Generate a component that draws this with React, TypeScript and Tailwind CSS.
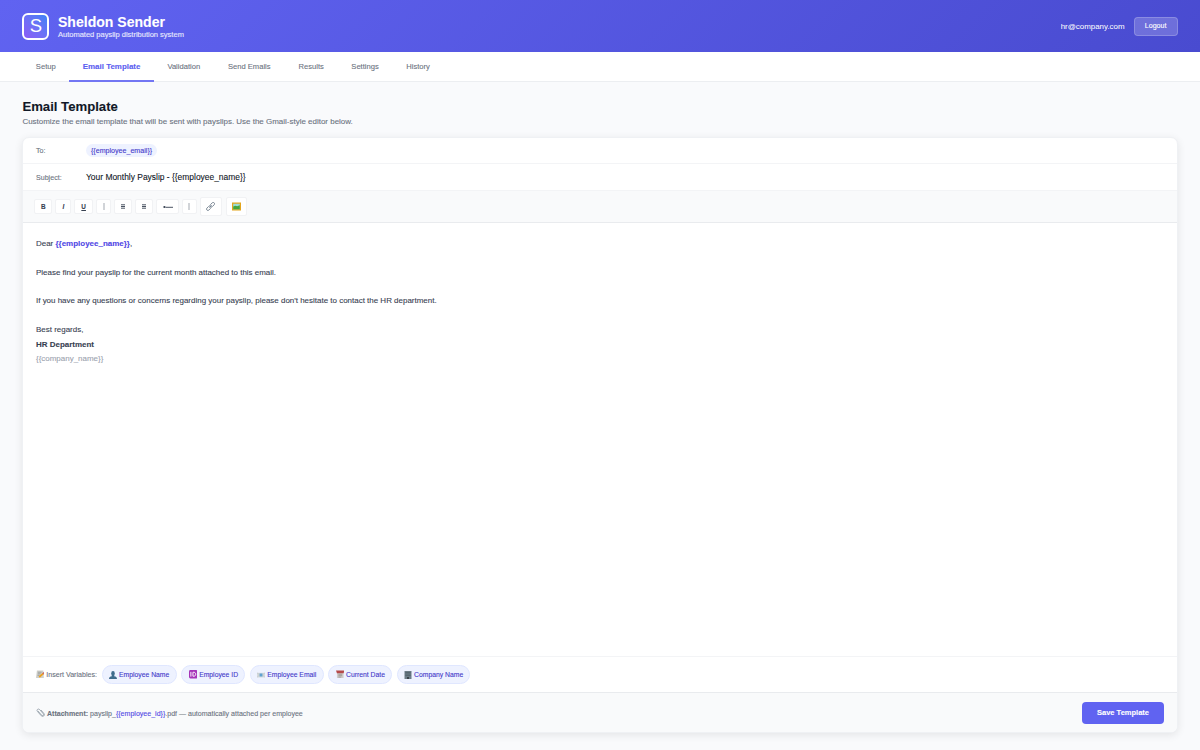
import type { ReactNode } from "react";

const TABS = [
  { label: "Setup", width: "w-[46.8px]" },
  { label: "Email Template", width: "w-[84.8px]", active: true },
  { label: "Validation", width: "w-[59.6px]" },
  { label: "Send Emails", width: "w-[71.4px]" },
  { label: "Results", width: "w-[52.6px]" },
  { label: "Settings", width: "w-[55px]" },
  { label: "History", width: "w-[51px]" },
];

const TOOLS: { label: ReactNode; size: string }[] = [
  { label: <b>B</b>, size: "w-[18px] h-[15px]" },
  { label: <b className="italic">I</b>, size: "w-[16px] h-[15px]" },
  { label: <b className="underline">U</b>, size: "w-[18.5px] h-[15px]" },
  { label: <BarIcon />, size: "w-[15.4px] h-[15px]" },
  { label: <LinesIcon />, size: "w-[18px] h-[15px]" },
  { label: <LinesIcon />, size: "w-[18px] h-[15px]" },
  { label: <BulletIcon />, size: "w-[22.5px] h-[15px]" },
  { label: <BarIcon />, size: "w-[15.4px] h-[15px]" },
  { label: <LinkIcon />, size: "w-[21.5px] h-[18.5px]" },
  { label: <PictureIcon />, size: "w-[21.5px] h-[18.5px]" },
];

const VARIABLES = [
  { label: "Employee Name", icon: <PersonIcon />, width: "w-[75px]" },
  { label: "Employee ID", icon: <IdIcon />, width: "w-[64px]" },
  { label: "Employee Email", icon: <MailIcon />, width: "w-[73.5px]" },
  { label: "Current Date", icon: <CalendarIcon />, width: "w-[64px]" },
  { label: "Company Name", icon: <BuildingIcon />, width: "w-[73.5px]" },
];

export default function App() {
  return (
    <div
      className="flex h-[750px] w-[1200px] flex-col overflow-hidden bg-[#f9fafc]
                 font-['Liberation_Sans',Arial,sans-serif] text-[#374151]
                 [-webkit-text-stroke:0.1px_currentColor]"
    >
      <Header />
      <Tabs />

      <main className="flex min-h-0 flex-1 flex-col px-[22.4px] pt-[17px] pb-[17px]">
        <h1 className="text-[13.15px] leading-[16px] font-bold text-[#111827]">Email Template</h1>
        <p className="mt-[1px] text-[7.98px] leading-[12px] text-[#6b7280]">
          Customize the email template that will be sent with payslips. Use the Gmail-style editor below.
        </p>

        <section
          className="mt-[9px] flex min-h-0 flex-1 flex-col overflow-hidden rounded-[7px]
                     border border-[#eff1f4] bg-white shadow-[0_2px_9px_rgba(0,0,0,0.09)]"
        >
          <Field label="To:">
            <span className="rounded-full bg-[#eef2ff] px-[5px] pt-[1px] text-[7.1px] leading-[12px] text-[#4338ca]">
              {"{{employee_email}}"}
            </span>
          </Field>
          <Field label="Subject:">
            <span className="pt-[1px] text-[8.45px] text-[#111827]">{"Your Monthly Payslip - {{employee_name}}"}</span>
          </Field>
          <Toolbar />
          <Body />
          <Variables />
          <Footer />
        </section>
      </main>
    </div>
  );
}

function Header() {
  return (
    <header
      className="flex h-[52.4px] shrink-0 items-center bg-linear-[135deg,#6063f1,#494bd0]
                 px-[22.4px] text-white"
    >
      <Logo />
      <div className="ml-[8.6px] pt-[2px]">
        <div className="text-[14.05px] leading-[15px] font-bold">Sheldon Sender</div>
        <div className="text-[7.5px] leading-[10px] text-white/85">
          Automated payslip distribution system
        </div>
      </div>
      <span className="ml-auto pt-[1px] text-[7.95px] text-white/95">hr@company.com</span>
      <button
        className="ml-[9px] h-[19px] w-[44px] rounded-[4px] border border-white/20
                   bg-white/20 pt-[1px] text-[7.1px] leading-none font-medium"
      >
        Logout
      </button>
    </header>
  );
}

function Tabs() {
  return (
    <nav className="flex h-[29.6px] shrink-0 border-b border-[#eceef1] bg-white pl-[22.4px] text-[7.6px] text-[#6b7280]">
      {TABS.map(t => (
        <a
          key={t.label}
          className={`flex items-center justify-center border-b-2 pt-[2px] ${t.width}
                      ${t.active ? "mb-[-0.6px] border-[#7376f3] text-[7.95px] font-bold text-[#5b5ef0]" : "border-transparent"}`}
        >
          {t.label}
        </a>
      ))}
    </nav>
  );
}

function Field({ label, children }: { label: string; children: ReactNode }) {
  return (
    <div className="flex h-[26.5px] shrink-0 items-center border-b border-[#f3f4f6] px-[12.6px]">
      <span className="w-[50px] pt-[2px] text-[7.1px] text-[#6b7280]">{label}</span>
      {children}
    </div>
  );
}

function Toolbar() {
  return (
    <div className="flex h-[32px] shrink-0 items-center gap-[3px] border-b border-[#e9ebee] bg-[#f9fafb] px-[11px]">
      {TOOLS.map((t, i) => (
        <button
          key={i}
          className={`flex shrink-0 items-center justify-center rounded-[2px] border last:ml-[1px]
                      border-[#f1f2f4] bg-white pt-[1px] text-[6.4px] leading-none text-[#374151] ${t.size}`}
        >
          {t.label}
        </button>
      ))}
    </div>
  );
}

function Body() {
  return (
    <div className="min-h-0 flex-1 px-[12.6px] pt-[13.8px] text-[7.97px] leading-[14.4px]">
      <p>
        Dear <b className="text-[#4f46e5]">{"{{employee_name}}"}</b>,
      </p>
      <br />
      <p>Please find your payslip for the current month attached to this email.</p>
      <br />
      <p>
        If you have any questions or concerns regarding your payslip, please don't hesitate to contact the HR
        department.
      </p>
      <br />
      <p>Best regards,</p>
      <p className="font-bold">HR Department</p>
      <p className="text-[#9ca3af]">{"{{company_name}}"}</p>
    </div>
  );
}

function Variables() {
  return (
    <div className="flex h-[36px] shrink-0 items-center gap-[4.7px] border-t border-[#f3f4f6] px-[12.6px] text-[6.8px]">
      <span className="flex w-[61px] items-center gap-[2px] text-[7.1px] whitespace-nowrap text-[#6b7280]">
        <MemoIcon />
        <span className="pt-[1px]">Insert Variables:</span>
      </span>
      {VARIABLES.map(v => (
        <button
          key={v.label}
          className={`flex h-[19px] items-center justify-center gap-[2px] rounded-full border
                      border-[#e0e7ff] bg-[#eef2ff] whitespace-nowrap text-[#4338ca] ${v.width}`}
        >
          {v.icon}
          <span className="pt-[1px]">{v.label}</span>
        </button>
      ))}
    </div>
  );
}

function Footer() {
  return (
    <div className="flex h-[40px] shrink-0 items-center border-t border-[#e9ebee] bg-[#f9fafb] px-[12.6px]">
      <ClipIcon />
      <p className="ml-[2px] pt-[3px] text-[7.05px] text-[#6b7280]">
        <b>Attachment:</b> payslip_<span className="text-[#4f46e5]">{"{{employee_id}}"}</span>.pdf — automatically
        attached per employee
      </p>
      <button className="ml-auto h-[22px] w-[82px] rounded-[4px] bg-[#6063f1] text-[7.5px] font-bold text-white">
        Save Template
      </button>
    </div>
  );
}

/* icons */

function Logo() {
  return (
    <div
      className="flex h-[27px] w-[27px] items-center justify-center rounded-[6px] border-2
                 border-white bg-linear-to-tr from-[#8b5cf6] to-[#3b82f6] pt-[1px] text-[18.5px]
                 leading-none [-webkit-text-stroke:0px]"
    >
      S
    </div>
  );
}

function BarIcon() {
  return (
    <svg width="2" height="7" viewBox="0 0 2 7">
      <path d="M1 0v7" stroke="#7d8590" strokeWidth="0.700" />
    </svg>
  );
}

function LinesIcon() {
  return (
    <svg width="4" height="5" viewBox="0 0 4 5" stroke="#374151" strokeWidth="0.9">
      <path d="M0 .8h4M0 2.5h4M0 4.2h4" />
    </svg>
  );
}

function BulletIcon() {
  return (
    <svg width="10" height="4" viewBox="0 0 10 4">
      <circle cx="1.4" cy="2" r="1.1" fill="#374151" />
      <path d="M2.500 2.300H10" stroke="#374151" strokeWidth="0.900" />
    </svg>
  );
}

function LinkIcon() {
  return (
    <svg width="9" height="9" viewBox="0 0 9 9" fill="none" stroke="#7b8794" strokeWidth="0.900">
      <rect x="3.9" y="1.2" width="5" height="2.8" rx="1.4" transform="rotate(-45 6.4 2.6)" />
      <rect x=".2" y="4.9" width="5" height="2.8" rx="1.4" transform="rotate(-45 2.7 6.3)" />
      <path d="M3.3 5.7l2.4-2.4" />
    </svg>
  );
}

function PictureIcon() {
  return (
    <svg width="9" height="9" viewBox="0 0 9 9">
      <path d="M0 .5h9v8H0z" fill="#e3a51d" />
      <path d="M1.200 1.700h6.600v5.600H1.200z" fill="#9bdbd8" />
      <path d="M1.200 4.500l2-.8 2 .6 2.600-1v4H1.200z" fill="#46a63c" />
    </svg>
  );
}

function PersonIcon() {
  return (
    <svg width="8" height="8" viewBox="0 0 8 8" fill="#3f6c8c">
      <ellipse cx="4" cy="2.5" rx="1.8" ry="2.4" />
      <path d="M0 8c0-1.800 1-2.400 2.800-2.800V4h2.400v1.200C7 5.600 8 6.200 8 8z" />
    </svg>
  );
}

function IdIcon() {
  return (
    <svg width="8.500" height="8.500" viewBox="0 0 9 9">
      <rect width="9" height="9" rx="1.500" fill="#a633b8" />
      <path d="M2 2v5M4.200 2.400v4.200h.8c2.800 0 2.800-4.200 0-4.200z" fill="none" stroke="#fff" strokeWidth="1" />
    </svg>
  );
}

function MailIcon() {
  return (
    <svg width="8" height="8" viewBox="0 0 8 8">
      <path d="M0 1.800h8v4.700H0z" fill="#d5dadc" />
      <path d="M2.500 2.500h3v3h-3z" fill="#5da2d3" />
      <path d="M0 1.800l2.500 2L0 6.500M8 1.800l-2.500 2L8 6.500" fill="none" stroke="#b9bfc3" strokeWidth=".5" />
    </svg>
  );
}

function CalendarIcon() {
  return (
    <svg width="8.500" height="8.500" viewBox="0 0 9 9">
      <path d="M1 2h7v6.500H1z" fill="#d0cbc8" />
      <path d="M0 .5h9L8 3.500H1z" fill="#b64a4a" />
      <path d="M2.500 4.500h4M2.500 6h4M2.500 7.500h3" stroke="#8d8988" strokeWidth=".7" />
    </svg>
  );
}

function BuildingIcon() {
  return (
    <svg width="8" height="8" viewBox="0 0 8 8">
      <path d="M.5 0h7v8h-7z" fill="#6c7c86" />
      <path d="M1.300 1.500h5.400M1.300 3h5.400M1.300 4.500h5.400" stroke="#4b5962" strokeWidth=".6" />
      <path d="M3 6h2v2H3z" fill="#3c444b" />
    </svg>
  );
}

function MemoIcon() {
  return (
    <svg width="8.500" height="8.500" viewBox="0 0 9 9">
      <path d="M1 .5h7l.5 8H0z" fill="#cfcfca" />
      <path d="M2 2.300h4M2 4h3M1.700 5.700h2" stroke="#858b8b" strokeWidth=".7" />
      <path d="M3.500 7.500L8 3.500" stroke="#eda21f" strokeWidth="1.900" />
      <path d="M7.500 4L8.800 2.800" stroke="#c9696b" strokeWidth="1.900" />
    </svg>
  );
}

function ClipIcon() {
  return (
    <svg width="9" height="9" viewBox="0 0 9 9" fill="none" stroke="#8d99a3" strokeWidth=".8">
      <path d="M2 3l3.700 4.300c1 1 2.600-.3 1.700-1.400L3.700 1.600C2.300.1.100 1.900 1.400 3.400l3.900 4.400c1.700 1.500 4-.4 2.700-2.200L5 2" />
    </svg>
  );
}
